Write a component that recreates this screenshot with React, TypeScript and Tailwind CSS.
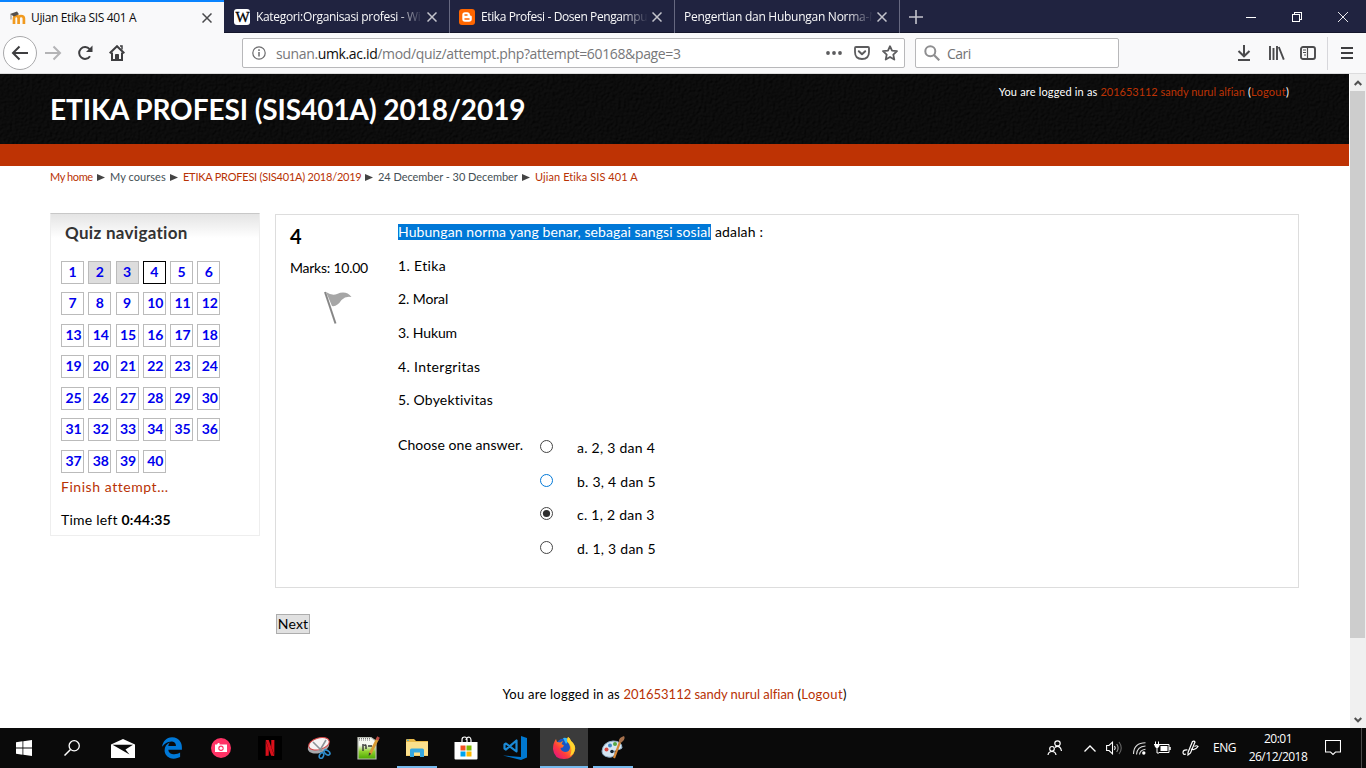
import React from "react";
import { FaEdgeLegacy } from "react-icons/fa";
import { SiNetflix } from "react-icons/si";

const ui = "font-['Open_Sans',sans-serif]";

function Close({ color }: { color: string }) {
  return (
    <svg width="10" height="10" viewBox="0 0 10 10" className="shrink-0">
      <path d="M0.5 0.5L9.5 9.5M9.5 0.5L0.5 9.5" stroke={color} strokeWidth="1.5" fill="none" />
    </svg>
  );
}

function MoodleIcon() {
  return (
    <svg width="16" height="16" viewBox="0 0 16 16" className="shrink-0">
      <path d="M4 14V8.5Q4 6 6.2 6Q8.6 6 8.6 8.5V14M8.6 8.5Q8.6 6 11 6Q13.9 6 13.9 8.5V14" fill="none" stroke="#f19a1f" strokeWidth="2.7" />
      <path d="M0 4L7 1.5L9 4.2L4 6.5Z" fill="#54504c" />
      <path d="M1 4.5V9.5" stroke="#777" strokeWidth="0.9" />
    </svg>
  );
}

function Tab({ title, spacing, icon }: { title: string; spacing: string; icon?: React.ReactNode }) {
  return (
    <div className="flex h-[33px] w-[225px] items-center border-r border-[#666880] pl-[9px] pt-[1px]">
      {icon}
      <div
        className={`h-[20px] flex-1 overflow-hidden whitespace-nowrap text-[12px] leading-[20px] text-[#f9f9fa] [mask-image:linear-gradient(to_right,black_calc(100%-26px),transparent_100%)] ${icon ? "ml-[6px]" : ""} ${spacing}`}
      >
        {title}
      </div>
      <div className="ml-[4px] mr-[12px] flex">
        <Close color="#c3c4cc" />
      </div>
    </div>
  );
}

function TabBar() {
  return (
    <div className="flex h-[33px] bg-[#202340] shadow-[inset_0_-1px_0_#14162b]">
      <div className="mr-px flex h-[33px] w-[224px] items-center border-t-2 border-[#0a84ff] bg-[#f9f9fa] pl-[10px]">
        <MoodleIcon />
        <div className="ml-[5px] flex-1 whitespace-nowrap text-[12px] leading-[20px] tracking-[-0.37px] text-[#0c0c0d]">
          Ujian Etika SIS 401 A
        </div>
        <div className="mr-[12px] flex">
          <Close color="#4a4a4c" />
        </div>
      </div>
      <Tab
        title="Kategori:Organisasi profesi - Wi"
        spacing="tracking-[-0.33px]"
        icon={
          <div className="flex h-4 w-4 items-center justify-center overflow-hidden rounded-[3px] bg-white">
            <span className="font-['Liberation_Serif',serif] text-[15px] leading-4 tracking-[-1px] text-black [-webkit-text-stroke:0.3px_black]">W</span>
          </div>
        }
      />
      <Tab
        title="Etika Profesi - Dosen Pengampu"
        spacing="tracking-[-0.4px]"
        icon={
          <div className="flex h-4 w-4 items-center justify-center rounded-[3px] bg-[#ff6600]">
            <svg width="16" height="16" viewBox="0 0 16 16">
              <path d="M3.3 6Q3.3 3.2 6 3.2H8.2Q10.8 3.2 10.9 5.8Q11 6.7 12 6.8Q12.8 6.9 12.8 7.8V10Q12.8 12.8 10 12.8H6Q3.3 12.8 3.3 10Z" fill="#fff" />
              <path d="M6 6H8M6 10H10" stroke="#ff6600" strokeWidth="1.5" strokeLinecap="round" />
            </svg>
          </div>
        }
      />
      <Tab title="Pengertian dan Hubungan Norma-N" spacing="tracking-[-0.27px]" />
      <div className="flex flex-1 items-center justify-between pl-[9px]">
        <svg width="14" height="14" viewBox="0 0 14 14">
          <path d="M7 0V14M0 7H14" stroke="#c3c4cc" strokeWidth="1.6" />
        </svg>
        <div className="flex gap-[36px] pr-[18px]">
          <svg width="10" height="10" viewBox="0 0 10 10" shapeRendering="crispEdges">
            <path d="M0 5.5H10" stroke="#fff" />
          </svg>
          <svg width="10" height="10" viewBox="0 0 10 10" shapeRendering="crispEdges">
            <path d="M0.5 2.5H7.5V9.5H0.5ZM2.5 2.5V0.5H9.5V7.5H7.5" stroke="#fff" fill="none" />
          </svg>
          <svg width="10" height="10" viewBox="0 0 10 10">
            <path d="M0 0L10 10M10 0L0 10" stroke="#fff" strokeWidth="0.9" />
          </svg>
        </div>
      </div>
    </div>
  );
}

function ToolBar() {
  return (
    <div className="flex h-[41px] items-center border-b border-[#dcdcdd] bg-[#f9f9fa] pl-[3px]">
      <div className="flex h-[34px] w-[34px] items-center justify-center rounded-full border border-[#a9a9ab] bg-white">
        <svg width="18" height="16" viewBox="0 0 18 16">
          <path d="M17 8H2M8.5 1.5L2 8L8.5 14.5" fill="none" stroke="#3e3e40" strokeWidth="2" />
        </svg>
      </div>
      <svg width="18" height="16" viewBox="0 0 18 16" className="ml-[7px]">
        <path d="M1 8H15.5M9.5 1.5L16 8L9.5 14.5" fill="none" stroke="#b4b4b6" strokeWidth="2" />
      </svg>
      <svg width="16" height="16" viewBox="0 0 16 16" className="ml-[15px]">
        <path d="M13 11.2A5.9 5.9 0 1 1 12.6 4.2" fill="none" stroke="#3e3e40" strokeWidth="2" />
        <path d="M15.5 0.5V7H9Z" fill="#3e3e40" />
      </svg>
      <svg width="16" height="16" viewBox="0 0 16 16" className="ml-[16px]">
        <path d="M0.7 8.3L8 1.2L15.3 8.3" fill="none" stroke="#3e3e40" strokeWidth="2" />
        <path d="M3 7.5V15H13V7.5" fill="none" stroke="#3e3e40" strokeWidth="2" />
        <path d="M6.5 15V9.5H9.5V15" fill="#3e3e40" stroke="#3e3e40" />
        <path d="M11 1H13V4.5" fill="none" stroke="#3e3e40" strokeWidth="1.5" />
      </svg>

      <div className="ml-[117px] flex h-[30px] w-[663px] items-center rounded-[2px] border border-[#b8b8ba] bg-white pl-[9px]">
        <svg width="14" height="14" viewBox="0 0 14 14">
          <circle cx="7" cy="7" r="6.2" fill="none" stroke="#6b6b6d" strokeWidth="1.2" />
          <path d="M7 6V10.5M7 3.3V4.9" stroke="#6b6b6d" strokeWidth="1.5" />
        </svg>
        <div className="ml-[10px] mt-[2px] flex-1 whitespace-nowrap text-[14px] leading-[20px] tracking-[-0.36px] text-[#777779]">
          sunan.<span className="text-[#0c0c0d]">umk.ac.id</span>/mod/quiz/attempt.php?attempt=60168&amp;page=3
        </div>
        <svg width="16" height="4" viewBox="0 0 16 4">
          <circle cx="2" cy="2" r="1.9" fill="#5c5c5e" />
          <circle cx="8" cy="2" r="1.9" fill="#5c5c5e" />
          <circle cx="14" cy="2" r="1.9" fill="#5c5c5e" />
        </svg>
        <svg width="16" height="16" viewBox="0 0 16 16" className="ml-[12px]">
          <path d="M2 2H14Q15 2 15 3V7Q15 14 8 14Q1 14 1 7V3Q1 2 2 2Z" fill="none" stroke="#5c5c5e" strokeWidth="1.8" />
          <path d="M4.8 6.2L8 9.2L11.2 6.2" fill="none" stroke="#5c5c5e" strokeWidth="2" strokeLinecap="round" strokeLinejoin="round" />
        </svg>
        <svg width="16" height="16" viewBox="0 0 16 16" className="ml-[12px] mr-[6px]">
          <path d="M8 1.2L10 5.7L15 6.2L11.3 9.6L12.3 14.6L8 12L3.7 14.6L4.7 9.6L1 6.2L6 5.7Z" fill="none" stroke="#5c5c5e" strokeWidth="1.8" strokeLinejoin="round" />
        </svg>
      </div>

      <div className="ml-[10px] flex h-[30px] w-[204px] items-center rounded-[2px] border border-[#b8b8ba] bg-white pl-[8px]">
        <svg width="16" height="16" viewBox="0 0 16 16">
          <circle cx="6.3" cy="6.3" r="5" fill="none" stroke="#8e8e90" strokeWidth="2" />
          <path d="M10 10L15.3 15.3" stroke="#8e8e90" strokeWidth="2.2" />
        </svg>
        <div className="ml-[7px] mt-[2px] text-[14px] leading-[20px] tracking-[-0.5px] text-[#737375]">Cari</div>
      </div>

      <div className="ml-auto flex items-center">
        <svg width="14" height="16" viewBox="0 0 14 16">
          <path d="M7 0V11M1.5 6L7 11.3L12.5 6" fill="none" stroke="#4a4a4c" strokeWidth="2" />
          <path d="M1 15H13" stroke="#4a4a4c" strokeWidth="2" />
        </svg>
        <svg width="16" height="14" viewBox="0 0 16 14" className="ml-[18px]">
          <path d="M1 0V14M4.5 2V14M8 0V14M9.8 1L14.8 13.6" fill="none" stroke="#4a4a4c" strokeWidth="1.9" />
        </svg>
        <svg width="16" height="14" viewBox="0 0 16 14" className="ml-[15px]">
          <rect x="1" y="1" width="14" height="12" rx="2" fill="none" stroke="#4a4a4c" strokeWidth="1.9" />
          <path d="M7.5 1V13" stroke="#4a4a4c" strokeWidth="1.2" />
          <path d="M3 4H6M3 6.5H6M4 9H6" stroke="#4a4a4c" />
        </svg>
        <div className="ml-[11px] h-[33px] w-px bg-[#d7d7db]" />
        <svg width="12" height="12" viewBox="0 0 12 12" className="ml-[13px] mr-[13px]">
          <path d="M0 1H12M0 6H12M0 11H12" stroke="#3e3e40" strokeWidth="2" />
        </svg>
      </div>
    </div>
  );
}

function Texture({ id }: { id: string }) {
  return (
    <svg className="absolute inset-0 h-full w-full" aria-hidden="true">
      <filter id={id} x="0" y="0" width="100%" height="100%" colorInterpolationFilters="sRGB">
        <feTurbulence type="fractalNoise" baseFrequency="0.35" numOctaves="2" seed="4" result="n" />
        <feDiffuseLighting in="n" surfaceScale="1.4" diffuseConstant="0.062" lightingColor="#ffffff">
          <feDistantLight azimuth="225" elevation="50" />
        </feDiffuseLighting>
      </filter>
      <rect width="100%" height="100%" filter={`url(#${id})`} />
    </svg>
  );
}

const Arrow = () => (
  <svg width="8" height="7" viewBox="0 0 8 7" className="mt-px">
    <path d="M0 0L8 3.5L0 7Z" fill="#444" />
  </svg>
);

function PageHeader() {
  return (
    <>
      <div className="relative h-[70px] bg-[#0c0c0c]">
        <Texture id="leather" />
        <div className="relative flex justify-between pl-[50px] pr-[60px]">
          <h1 className="mt-[18px] whitespace-nowrap text-[28px] font-bold leading-[34px] tracking-[-0.08px] text-white">
            ETIKA PROFESI (SIS401A) 2018/2019
          </h1>
          <div className="mt-[10px] whitespace-nowrap text-[11px] leading-[16px] tracking-[0.17px] text-white">
            You are logged in as <span className="tracking-[-0.02px] text-[#be3304]">201653112 sandy nurul alfian</span> (
            <span className="tracking-[0.25px] text-[#be3304]">Logout</span>)
          </div>
        </div>
      </div>
      <div className="h-[22px] bg-[#be3304]" />
      <div className="flex h-[22px] items-center whitespace-nowrap pl-[50px] text-[11px] leading-[16px] text-[#444f55]">
        <span className="w-[47px] tracking-[-0.4px] text-[#b83204]">My home</span>
        <Arrow />
        <span className="ml-[5px] w-[60px] tracking-[0.06px]">My courses</span>
        <Arrow />
        <span className="ml-[5px] w-[182px] tracking-[-0.23px] text-[#b83204]">ETIKA PROFESI (SIS401A) 2018/2019</span>
        <Arrow />
        <span className="ml-[5px] w-[144px] tracking-[-0.04px]">24 December - 30 December</span>
        <Arrow />
        <span className="ml-[5px] tracking-[0.08px] text-[#b83204]">Ujian Etika SIS 401 A</span>
      </div>
    </>
  );
}

function QuizNavigation() {
  return (
    <div className="mt-[25px] h-[323px] w-[210px] border border-[#eeeeee] border-t-[#c8c8c8] bg-[linear-gradient(to_bottom,#e4e4e4_0,#ffffff_24px)] pl-[10px]">
      <h2 className="ml-[4px] mt-[8px] text-[17px] font-bold leading-[22px] tracking-[0.29px] text-[#333]">Quiz navigation</h2>
      <div className="mt-[17px] grid w-[165px] auto-rows-[31.45px] grid-cols-[repeat(6,27.25px)]">
        {Array.from({ length: 40 }, (_, i) => i + 1).map((n) => (
          <div
            key={n}
            className={`flex h-[23px] w-[23px] items-center justify-center border pb-[1px] text-[14px] font-bold leading-[20px] tracking-[-0.2px] text-[#0000ee] ${
              n === 4 ? "border-black bg-white" : n === 2 || n === 3 ? "border-[#bbb] bg-[#ddd]" : "border-[#bbb] bg-white"
            }`}
          >
            <span className={n > 9 ? "pl-[2px]" : ""}>{n}</span>
          </div>
        ))}
      </div>
      <div className="mt-[-4px] text-[14px] leading-[20px] tracking-[0.55px] text-[#b83204]">Finish attempt...</div>
      <div className="mt-[13px] text-[14px] leading-[20px] tracking-[0.23px] text-black">
        Time left <b>0:44:35</b>
      </div>
    </div>
  );
}

function Radio({ state }: { state: "off" | "hover" | "on" }) {
  return (
    <svg width="13" height="13" viewBox="0 0 13 13" className="mt-[4px]">
      <circle cx="6.5" cy="6.5" r="6" fill="#fff" stroke={state === "hover" ? "#0078d7" : "#444"} />
      {state === "on" && <circle cx="6.5" cy="6.5" r="3.6" fill="#2d2d2d" />}
    </svg>
  );
}

const statements: [string, string][] = [
  ["1. Etika", "tracking-[0.35px]"],
  ["2. Moral", "tracking-[-0.1px]"],
  ["3. Hukum", "tracking-[-0.1px]"],
  ["4. Intergritas", "tracking-[0.35px]"],
  ["5. Obyektivitas", "tracking-[0.18px]"],
];

const options: [string, "off" | "hover" | "on"][] = [
  ["a. 2, 3 dan 4", "off"],
  ["b. 3, 4 dan 5", "hover"],
  ["c. 1, 2 dan 3", "on"],
  ["d. 1, 3 dan 5", "off"],
];

function Question() {
  return (
    <div className="mt-[26px] flex h-[374px] w-[1024px] border border-[#ddd] bg-white text-[14px] leading-[20px]">
      <div className="w-[122px] pl-[14px]">
        <div className="mt-[9px] text-[20px] font-bold leading-[24px]">4</div>
        <div className="mt-[10px] tracking-[-0.24px]">Marks: 10.00</div>
        <svg width="28" height="34" viewBox="0 0 28 34" className="ml-[34px] mt-[13px]">
          <path d="M2 1Q8 5 13 3Q22 -1 27.500 6Q22 4.500 17.500 9Q13 16 8 15Z" fill="#a6a6a6" />
          <path d="M1 1L11.500 32.500" stroke="#868686" strokeWidth="2" />
        </svg>
      </div>
      <div>
        <div className="mt-[9px] flex h-[16px] leading-[16px]">
          <span className="w-[313px] whitespace-nowrap bg-[#0078d7] tracking-[0.09px] text-white">
            Hubungan norma yang benar, sebagai sangsi sosial
          </span>
          <span className="ml-[4px] tracking-[0.14px]">adalah :</span>
        </div>
        <div className="mt-[15.850px]">
          {statements.map(([text, spacing]) => (
            <div key={text} className={`mb-[13.6px] leading-[20px] ${spacing}`}>
              {text}
            </div>
          ))}
        </div>
        <div className="mt-[25.850px] flex">
          <div className="mt-[-13px] w-[142px] pt-[12px] tracking-[0.07px]">Choose one answer.</div>
          <div>
            {options.map(([text, state]) => (
              <div key={text} className="mb-[13.6px] flex h-[20px]">
                <Radio state={state} />
                <span className="ml-[24px] mt-[2px] tracking-[0.25px]">{text}</span>
              </div>
            ))}
          </div>
        </div>
      </div>
    </div>
  );
}

function Scrollbar() {
  return (
    <div className="flex w-[17px] flex-col border-l border-white bg-[#f0f0f0]">
      <div className="flex h-[17px] items-center justify-center">
        <svg width="8" height="6" viewBox="0 0 8 6">
          <path d="M0.700 5L4 1.700L7.300 5" fill="none" stroke="#505050" strokeWidth="2" />
        </svg>
      </div>
      <div className="h-[547px] w-[15px] bg-[#cdcdcd]" />
      <div className="mt-auto flex h-[17px] items-center justify-center">
        <svg width="8" height="6" viewBox="0 0 8 6">
          <path d="M0.700 1L4 4.300L7.300 1" fill="none" stroke="#505050" strokeWidth="2" />
        </svg>
      </div>
    </div>
  );
}

function Slot({ children, open, active }: { children: React.ReactNode; open?: boolean; active?: boolean }) {
  return (
    <div className={`relative flex h-10 items-center justify-center ${active ? "ml-px w-[48px] bg-[#3b3b3b]" : "w-[49px]"}`}>
      {children}
      {(open || active) && (
        <div className={`absolute bottom-0 h-[2px] bg-[#76b9ed] ${active ? "inset-x-0" : "left-[5px] w-[40px]"}`} />
      )}
    </div>
  );
}

function TaskIcons() {
  return (
    <div className="flex h-10">
      <Slot>
        <svg width="16" height="16" viewBox="0 0 16 16" className="mr-[1px]">
          <path d="M0 2.300L6.500 1.300V7.500H0ZM7.300 1.200L16 0V7.500H7.300ZM0 8.500H6.500V14.700L0 13.700ZM7.300 8.500H16V16L7.300 14.800Z" fill="#fff" />
        </svg>
      </Slot>
      <Slot>
        <svg width="16" height="16" viewBox="0 0 16 16" className="mr-[3px]">
          <circle cx="10.200" cy="5.800" r="5.100" fill="none" stroke="#fff" strokeWidth="1.300" />
          <path d="M6.500 9.500L0.500 15.500" stroke="#fff" strokeWidth="1.500" />
        </svg>
      </Slot>
      <Slot>
        <svg width="24" height="19" viewBox="0 0 24 19">
          <path d="M0 5.500L12 0L24 5.500V19H0Z" fill="#fff" />
          <path d="M1.500 5.700H22L14.500 10.500L18.500 15.500Z" fill="#0a0a0a" />
        </svg>
      </Slot>
      <Slot>
        <FaEdgeLegacy size={22} color="#0078d7" />
      </Slot>
      <Slot>
        <svg width="20" height="20" viewBox="0 0 20 20">
          <circle cx="10" cy="10" r="10" fill="#ff3366" />
          <path d="M4 6.500H6L7 5H8.500V6.500H16V14H4Z" fill="#fff" />
          <circle cx="10" cy="10.200" r="2.700" fill="#ff3366" />
          <circle cx="10" cy="10.200" r="1.500" fill="#fff" />
        </svg>
      </Slot>
      <Slot>
        <div className="flex h-6 w-6 items-center justify-center bg-black">
          <SiNetflix size={16} color="#d80f1a" />
        </div>
      </Slot>
      <Slot>
        <svg width="24" height="22" viewBox="0 0 24 22">
          <ellipse cx="11.500" cy="9.500" rx="11" ry="6.500" transform="rotate(-18 11.500 9.500)" fill="#a7a9ad" />
          <ellipse cx="12" cy="6.800" rx="10.500" ry="5.800" transform="rotate(-16 12 6.800)" fill="#f7f4f4" stroke="#d64545" />
          <path d="M6 5L15 14M19 3L12.500 14" stroke="#8d9297" strokeWidth="1.600" />
          <ellipse cx="20" cy="15.500" rx="3.300" ry="1.900" transform="rotate(35 20 15.500)" fill="none" stroke="#2f8fd0" strokeWidth="1.600" />
          <ellipse cx="14.500" cy="18.500" rx="2" ry="3" transform="rotate(25 14.500 18.500)" fill="none" stroke="#2f8fd0" strokeWidth="1.600" />
        </svg>
      </Slot>
      <Slot>
        <svg width="24" height="24" viewBox="0 0 24 24">
          <defs>
            <linearGradient id="npp" x1="0" y1="0" x2="0" y2="1">
              <stop offset="0.350" stopColor="#f6f8f2" />
              <stop offset="0.650" stopColor="#8fd12f" />
              <stop offset="1" stopColor="#4aa800" />
            </linearGradient>
          </defs>
          <path d="M2 1.500H15L20 5V23H2Z" fill="url(#npp)" stroke="#b9bdb4" strokeWidth="1.200" />
          <path d="M3 2.500H14M3 4H15" stroke="#777" strokeDasharray="1 1" />
          <path d="M7 15V8M8 9.500Q10 8 10 10V13M12 10H16" stroke="#333" strokeWidth="1.400" fill="none" />
          <path d="M21.500 3L14 18" stroke="#d79a34" strokeWidth="2.800" />
          <path d="M22.500 1L21 4" stroke="#b94a42" strokeWidth="3" />
          <path d="M13 16.500L15.200 17.700L12.700 20Z" fill="#333" />
        </svg>
      </Slot>
      <Slot open>
        <svg width="22" height="18" viewBox="0 0 22 18">
          <path d="M0 1Q0 0 1 0H8L10 2H22V17H0Z" fill="#e9b949" />
          <path d="M0 3H22V16.500H0Z" fill="#fbe08c" />
          <path d="M1 1.200H3" stroke="#2fa5dc" strokeWidth="1" />
          <path d="M4 18V11Q4 9.500 5.500 9.500H16.500Q18 9.500 18 11V18H14V13.500H8V18Z" fill="#35a7e0" />
        </svg>
      </Slot>
      <Slot>
        <svg width="24" height="24" viewBox="0 0 24 24">
          <path d="M8 7V4Q8 1 10.500 1Q13 1 13 4V7M12 4Q12.500 1 15 1Q17 1.500 17 4V7" fill="none" stroke="#fff" strokeWidth="1.200" />
          <path d="M0.500 6H23.500V22.500Q23.500 23.500 22.500 23.500H1.500Q0.500 23.500 0.500 22.500Z" fill="#fff" />
          <path d="M6.500 9.500H11.500V14.500H6.500Z" fill="#f25022" />
          <path d="M12.500 9.500H17.500V14.500H12.500Z" fill="#7fba00" />
          <path d="M6.500 15.500H11.500V20.500H6.500Z" fill="#00a4ef" />
          <path d="M12.500 15.500H17.500V20.500H12.500Z" fill="#ffb900" />
        </svg>
      </Slot>
      <Slot>
        <svg width="24" height="24" viewBox="0 0 24 24">
          <path d="M18 0L24 2V21.500L18 24L0 19.500L18 21Z" fill="#0078d0" />
          <path d="M13.500 4.500V15.500L3 7.500L1.500 8.500V12.500L3 13.500Z" fill="none" stroke="#1b8ad6" strokeWidth="2.200" strokeLinejoin="round" />
        </svg>
      </Slot>
      <Slot active>
        <svg width="24" height="24" viewBox="0 0 24 24">
          <defs>
            <linearGradient id="fox" x1="1" y1="0" x2="0.100" y2="0.900">
              <stop offset="0" stopColor="#fff13d" />
              <stop offset="0.400" stopColor="#ff9a1c" />
              <stop offset="0.700" stopColor="#ff3b3d" />
              <stop offset="1" stopColor="#e4157c" />
            </linearGradient>
          </defs>
          <circle cx="12" cy="11" r="8.500" fill="#1a55c4" />
          <path d="M11 2Q15 1 17 4L14 8Z" fill="#36b8f5" />
          <path d="M16 1Q18 2 19 5Q24 9 23 14Q21 23 12 23Q2 23 1 13Q1 7 4 3L5 6L8.500 6.500Q10 5 11 5L9.500 8L12 9.500Q11 12 8.500 12Q9 15.500 13 16Q18 16 18 11Q18 8 15 5.500Q15 3 16 1Z" fill="url(#fox)" />
          <path d="M16 1Q18 2 19 5Q24 9 22.500 15Q21 19 18 20Q21 13 17.500 8Q15 5.500 15.200 3.500Z" fill="#ffd52e" />
        </svg>
      </Slot>
      <Slot open>
        <svg width="24" height="24" viewBox="0 0 24 24">
          <path d="M1 15Q2 6 12 5Q21 5 21 12Q19 14 15 14Q12 15 14 18Q12 22 7 21Q1 20 1 15Z" fill="#d5e6f3" stroke="#8faec6" />
          <circle cx="5.500" cy="13.500" r="2" fill="#d9463e" />
          <circle cx="9" cy="9.500" r="2" fill="#3f86c6" />
          <circle cx="14" cy="8" r="2" fill="#54a844" />
          <circle cx="11" cy="15.500" r="1.800" fill="#142330" />
          <path d="M13 22L19 6" stroke="#d88736" strokeWidth="2.200" />
          <path d="M18 6Q17 2 23 0Q25 3 20.500 6.500Z" fill="#a5704c" />
        </svg>
      </Slot>
    </div>
  );
}

function Tray() {
  return (
    <div className="flex h-10 items-center text-white">
      <svg width="16" height="16" viewBox="0 0 16 16">
        <g fill="none" stroke="#fff" strokeWidth="1.200">
          <circle cx="10.500" cy="3.500" r="2.700" />
          <path d="M8 7.500Q10.500 5 13 7.500Q14 8.500 14.500 11" />
          <circle cx="5" cy="8.800" r="2.300" />
          <path d="M1 15Q1.500 11.500 5 11.500Q8.500 11.500 9 15" />
        </g>
      </svg>
      <svg width="12" height="7" viewBox="0 0 12 7" className="ml-[21px]">
        <path d="M0.500 6.500L6 1L11.500 6.500" fill="none" stroke="#fff" strokeWidth="1.300" />
      </svg>
      <svg width="17" height="14" viewBox="0 0 17 14" className="ml-[10px]">
        <path d="M0.600 4.500H3L6.500 1.200V12.800L3 9.500H0.600Z" fill="none" stroke="#fff" strokeWidth="1.100" />
        <path d="M8.500 5Q10 7 8.500 9" fill="none" stroke="#fff" strokeWidth="1.100" />
        <path d="M10.700 3Q13.500 7 10.700 11" fill="none" stroke="#999" strokeWidth="1.100" />
        <path d="M13 1Q17.500 7 13 13" fill="none" stroke="#666" strokeWidth="1.100" />
      </svg>
      <svg width="13" height="13" viewBox="0 0 13 13" className="ml-[10px]">
        <g fill="none" stroke="#ddd" strokeWidth="1.100">
          <path d="M0.500 12Q0.800 1 12.500 0.800" />
          <path d="M3.500 12.500Q4 4.500 12.500 4" />
          <path d="M6.500 12.500Q7 8 12.500 7.300" />
        </g>
        <circle cx="10.800" cy="11" r="1.700" fill="#fff" />
      </svg>
      <svg width="17" height="14" viewBox="0 0 17 14" className="ml-[8px]">
        <path d="M5 3.500H15V11.500H5" fill="none" stroke="#fff" />
        <path d="M6.500 5H13.500V10H6.500Z" fill="#fff" />
        <path d="M16 6V9" stroke="#fff" strokeWidth="1.500" />
        <path d="M1.500 0.500V3M4.500 0.500V3M0 3.500H6M3 6V12H5" stroke="#fff" fill="none" />
        <path d="M0.500 3H5.500V5L4 7H2L0.500 5Z" fill="#fff" />
      </svg>
      <svg width="17" height="16" viewBox="0 0 17 16" className="ml-[11px]">
        <g fill="none" stroke="#fff" strokeWidth="1.200">
          <path d="M6 12.500L10.500 1.500Q12 0.500 13 2L8.500 13L6 15Z" />
          <path d="M5.500 10Q1 9.500 1 12.500Q1 15 4 14M9 9Q13 11 16 6.500Q14.500 5 12.500 6.500" />
        </g>
      </svg>
      <span className="ml-[14px] w-[24px] text-[12px] leading-[18px] tracking-[-0.45px]">ENG</span>
      <div className="ml-[8px] flex w-[66px] flex-col items-center whitespace-nowrap text-[12px] leading-[18px] tracking-[-0.5px]">
        <span>20:01</span>
        <span>26/12/2018</span>
      </div>
      <svg width="16" height="16" viewBox="0 0 16 16" className="ml-[14px] mr-[20px]">
        <path d="M0.500 0.500H15.500V12H10.500L8 14.500L5.500 12H0.500Z" fill="none" stroke="#fff" strokeWidth="1.100" />
      </svg>
      <div className="mr-[4px] h-10 w-px bg-[#4a4a4a]" />
    </div>
  );
}

export default function App() {
  return (
    <div className={`flex h-[768px] w-[1366px] flex-col overflow-hidden bg-white ${ui}`}>
      <TabBar />
      <ToolBar />
      <div className="flex h-[654px]">
        <div className="w-[1349px] font-['Lato',sans-serif] text-black">
          <PageHeader />
          <div className="flex h-[421px] pl-[50px]">
            <QuizNavigation />
            <div className="ml-[15px]">
              <Question />
              <button className="ml-[1px] mt-[26px] flex h-[20px] w-[34px] items-center justify-center border border-[#adadad] bg-[#e1e1e1] text-[14px] leading-[18px] tracking-[0.2px]">
                Next
              </button>
            </div>
          </div>
          <div className="mt-[75px] whitespace-nowrap text-center text-[13px] leading-[20px] tracking-[0.24px]">
            You are logged in as <span className="tracking-[-0.03px] text-[#b83204]">201653112 sandy nurul alfian</span> (
            <span className="tracking-[0.35px] text-[#b83204]">Logout</span>)
          </div>
        </div>
        <Scrollbar />
      </div>
      <div className="flex h-10 justify-between bg-[#0a0a0a]">
        <TaskIcons />
        <Tray />
      </div>
    </div>
  );
}
